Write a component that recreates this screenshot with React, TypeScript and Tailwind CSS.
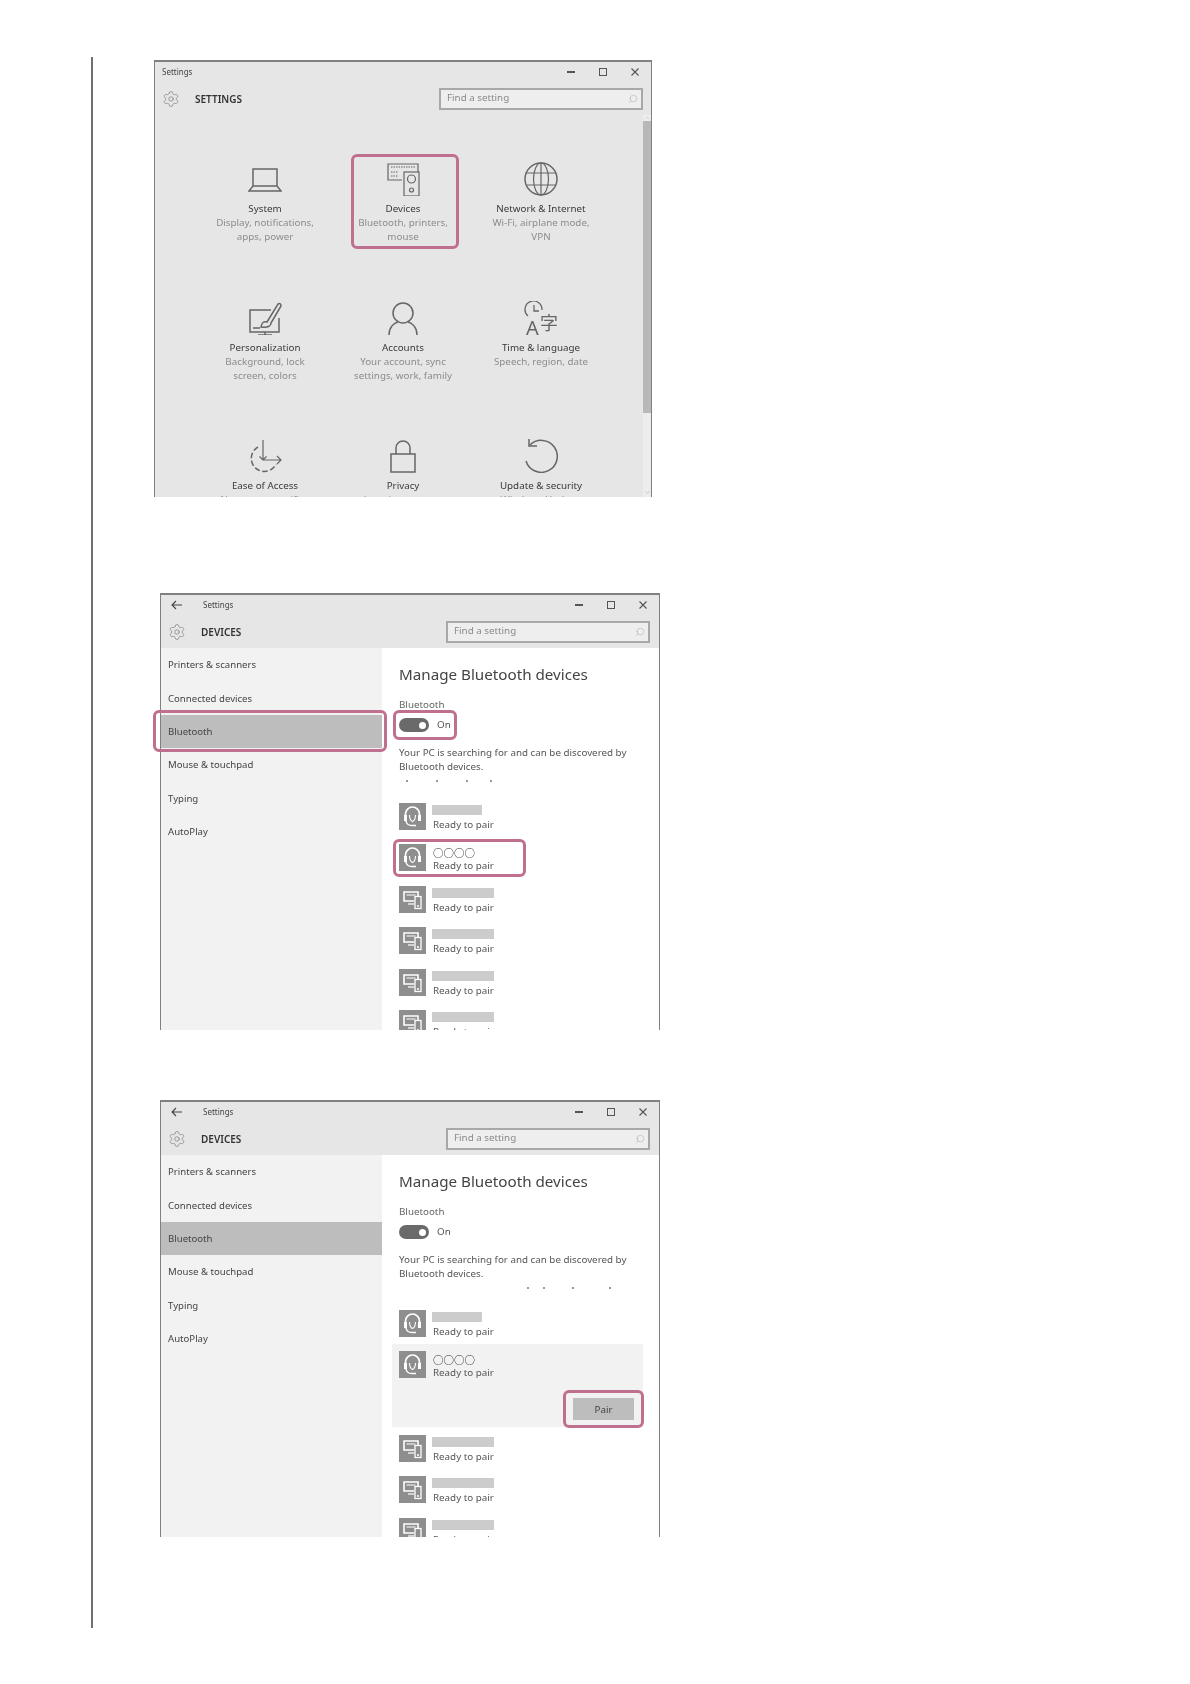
import { ChevronDown, ChevronUp, Search, Settings } from "lucide-react";
import type { ReactNode } from "react";

const font = { fontFamily: '"Noto Sans", "Noto Sans CJK JP", sans-serif' };

function Controls() {
  return (
    <div className="ml-auto flex h-full text-[#444]">
      <div className="flex w-[32px] items-center justify-center"><div className="h-[1.5px] w-[8px] bg-[#555]" /></div>
      <div className="flex w-[32px] items-center justify-center"><div className="size-[8px] border border-[#555]" /></div>
      <div className="flex w-[32px] items-center justify-center">
        <svg width="10" height="10" viewBox="0 0 10 10" fill="none" stroke="#555" strokeWidth="1.100"><path d="M1.500 1.500l7 7M8.500 1.500l-7 7" /></svg>
      </div>
    </div>
  );
}

function Header({ title, devices }: { title: string; devices?: boolean }) {
  return (
    <div className={`flex h-[33px] items-center pl-[7px] ${devices ? "pr-[9px]" : "pr-[8px]"}`}>
      <Settings size={18} strokeWidth={0.9} className="text-[#777]" />
      <div className="ml-[15px] pt-[1px] text-[10px] font-semibold text-[#333]">{title}</div>
      <div className="ml-auto flex h-[22px] w-[204px] items-center border-2 border-[#a8a8a8] bg-[#eeeeee] pl-[6px] pr-[3px] text-[9.8px] text-[#8a8a8a]">
        Find a setting
        <Search size={10} strokeWidth={1} className="ml-auto -scale-x-100 text-[#999]" />
      </div>
    </div>
  );
}

function Ring({ className }: { className: string }) {
  return <div className={`absolute rounded-[6px] border-[3px] border-[#c0708f] ${className}`} />;
}

const S = { fill: "none", stroke: "#666", strokeWidth: 1.2 };

function IconBox({ children }: { children: ReactNode }) {
  return <svg width="34" height="34" viewBox="0 0 34 34" {...S}>{children}</svg>;
}

const icons: Record<string, ReactNode> = {
  System: <IconBox><path d="M5 24V7h24v17M1 29l4-5h24l4 5z" strokeWidth="1.500" /></IconBox>,
  Devices: (
    <IconBox>
      <path d="M16 18H2V2h30v8" />
      <path d="M5 5h24M5 10h7M5 14h7" strokeDasharray="1.500 1" />
      <rect x="18" y="10" width="15" height="24" fill="#e6e6e6" />
      <circle cx="25.500" cy="17" r="4" />
      <circle cx="25.500" cy="28" r="2" />
    </IconBox>
  ),
  "Network & Internet": (
    <IconBox>
      <circle cx="17" cy="17" r="16" strokeWidth="1.500" />
      <ellipse cx="17" cy="17" rx="7.500" ry="16" />
      <path d="M17 1v32M2.500 11h29M2.500 23h29" />
    </IconBox>
  ),
  Personalization: (
    <IconBox>
      <path d="M23 9H2v22h29V17M17 31v3M10 34h14" strokeWidth="1.500" />
      <path d="M13 26c1-5 3-6 6-5L30 3c2-1 3 0 3 2L23 22c0 3-3 5-10 4zM5 27h7" strokeWidth="1.500" />
    </IconBox>
  ),
  Accounts: (
    <IconBox>
      <circle cx="17" cy="12" r="10" strokeWidth="1.500" />
      <path d="M3 34c0-8 5-12 9-13M31 34c0-8-5-12-9-13" strokeWidth="1.500" />
    </IconBox>
  ),
  "Time & language": (
    <IconBox>
      <path d="M4 15A8.500 8.500 0 1 1 18 9M10 4v6h5" strokeWidth="1.300" />
      <text x="2" y="34" fontSize="20" fill="#666" stroke="none" style={font}>A</text>
      <text x="16" y="29" fontSize="18" fill="#666" stroke="none" style={font}>字</text>
    </IconBox>
  ),
  "Ease of Access": (
    <IconBox>
      <path d="M10 8A13 13 0 1 0 28 25" strokeDasharray="5.500 2.500" strokeWidth="1.500" />
      <path d="M15 1v20M11.500 17.500l3.500 3.500 3.500-3.500M15 21h18M29 17l4 4-4 4" />
    </IconBox>
  ),
  Privacy: (
    <IconBox>
      <rect x="5" y="15" width="24" height="18" strokeWidth="1.500" />
      <path d="M10 15V9a7 7 0 0 1 14 0v6" strokeWidth="1.500" />
    </IconBox>
  ),
  "Update & security": (
    <IconBox>
      <path d="M6 6A16 16 0 1 1 2 22" strokeWidth="1.500" />
      <path d="M5 0v7h8" strokeWidth="1.500" />
    </IconBox>
  ),
};

const items: [string, string[]][] = [
  ["System", ["Display, notifications,", "apps, power"]],
  ["Devices", ["Bluetooth, printers,", "mouse"]],
  ["Network & Internet", ["Wi-Fi, airplane mode,", "VPN"]],
  ["Personalization", ["Background, lock", "screen, colors"]],
  ["Accounts", ["Your account, sync", "settings, work, family"]],
  ["Time & language", ["Speech, region, date"]],
  ["Ease of Access", ["Narrator, magnifier,"]],
  ["Privacy", ["Location, camera"]],
  ["Update & security", ["Windows Update,"]],
];

function SettingsWindow() {
  return (
    <div className="relative mt-[3px] w-[498px]">
      <div className="flex h-[437px] flex-col overflow-hidden border-x border-t-2 border-[#808080] bg-[#e6e6e6]">
        <div className="flex h-[20px] shrink-0 items-center pl-[7px] text-[8px] text-[#444]">
          Settings
          <Controls />
        </div>
        <Header title="SETTINGS" />
        <div className="flex min-h-0 flex-1">
          <div className="grid flex-1 auto-rows-[138.5px] grid-cols-[repeat(3,138px)] pl-[41px] pt-[47px]">
            {items.map(([name, lines]) => (
              <div key={name} className="flex flex-col items-center text-center text-[9.8px] leading-[14px]">
                <div className="mb-[6px] h-[34px]">{icons[name]}</div>
                <div className="text-[#3a3a3a]">{name}</div>
                {lines.map((l) => (
                  <div key={l} className="whitespace-nowrap text-[#8c8c8c]">{l}</div>
                ))}
              </div>
            ))}
          </div>
          <div className="flex w-[8px] flex-col items-center bg-[#ededed] text-[#aaa]">
            <ChevronUp size={7} className="h-[6px]" />
            <div className="h-[292px] w-full bg-[#b8b8b8]" />
            <ChevronDown size={7} className="mt-auto mb-[1px]" />
          </div>
        </div>
      </div>
      <Ring className="left-[197px] top-[94px] h-[95px] w-[108px]" />
    </div>
  );
}

function Headset() {
  return (
    <svg width="27" height="27" viewBox="0 0 27 27" fill="none" stroke="#fff" strokeWidth="1.700" className="bg-[#8e8e8e]">
      <path d="M6.500 13v-2a7 7 0 0 1 14 0v2" />
      <rect x="5" y="12" width="3" height="6" fill="#fff" stroke="none" />
      <rect x="19" y="12" width="3" height="6" fill="#fff" stroke="none" />
      <path d="M10.500 12c0 3.500 1 5.500 3 6.500 2-1 3-3 3-6.500" strokeWidth="1.100" />
      <path d="M7 18c.5 3 3 4.500 6 4.500h4" strokeWidth="1.500" />
    </svg>
  );
}

function DeviceGlyph() {
  return (
    <svg width="27" height="27" viewBox="0 0 27 27" fill="none" stroke="#fff" strokeWidth="1.600" className="bg-[#8e8e8e]">
      <path d="M15 15H5V6h14v4" />
      <path d="M7.500 9h9" strokeWidth="1" />
      <path d="M9 18h6" strokeWidth="1.200" />
      <rect x="16" y="10.500" width="6" height="12" strokeWidth="1.300" />
      <path d="M19 19v2" strokeWidth="1.500" />
    </svg>
  );
}

function Row({ kind, wide, named }: { kind: "head" | "dev"; wide?: boolean; named?: boolean }) {
  return (
    <div className="flex h-[27px] shrink-0">
      {kind === "head" ? <Headset /> : <DeviceGlyph />}
      <div className="ml-[6px] flex flex-col text-[9.8px] leading-[14px] text-[#555]">
        {named ? (
          <div className="mt-[2px] -mb-[1px] shrink-0 pl-[1px] text-[10.5px] text-[#333]">○○○○</div>
        ) : (
          <div className={`mt-[2px] mb-[3px] h-[10px] shrink-0 bg-[#cccccc] ${wide ? "w-[62px]" : "w-[50px]"}`} />
        )}
        <div className="shrink-0 whitespace-nowrap pl-[1px]">Ready to pair</div>
      </div>
    </div>
  );
}

function DevicesWindow({ step }: { step: 2 | 3 }) {
  const menu = ["Printers & scanners", "Connected devices", "Bluetooth", "Mouse & touchpad", "Typing", "AutoPlay"];
  return (
    <div className="relative w-[500px]">
      <div className="flex h-[437px] flex-col overflow-hidden border-x border-t-2 border-[#808080] bg-[#e6e6e6]">
        <div className="flex h-[20px] shrink-0 items-center text-[8px] text-[#444]">
          <svg width="12" height="10" viewBox="0 0 12 10" fill="none" stroke="#444" strokeWidth="1.100" className="ml-[10px]"><path d="M11 5H1M5 1L1 5l4 4" /></svg>
          <span className="ml-[20px]">Settings</span>
          <Controls />
        </div>
        <Header title="DEVICES" devices />
        <div className="flex min-h-0 flex-1 bg-white">
          <div className="w-[221px] shrink-0 bg-[#f2f2f2] text-[9.6px] text-[#444]">
            {menu.map((m) => (
              <div key={m} className={`flex h-[33.3px] items-center pl-[7px] pt-[2px] ${m === "Bluetooth" ? "bg-[#bdbdbd]" : ""}`}>{m}</div>
            ))}
          </div>
          <div className="min-w-0 flex-1 pl-[17px]">
            <div className="mt-[14px] h-[24px] whitespace-nowrap text-[15.2px] leading-[24px] text-[#444]">Manage Bluetooth devices</div>
            <div className="mt-[12px] h-[14px] text-[9.8px] leading-[14px] text-[#666]">
              <div className={step === 2 ? "h-[10px] overflow-hidden" : ""}>Bluetooth</div>
            </div>
            <div className="mt-[6px] flex h-[14px] items-center text-[9.8px] text-[#555]">
              <div className="flex h-[14px] w-[30px] items-center justify-end rounded-full bg-[#6a6a6a] pr-[3px]">
                <div className="size-[7px] rounded-full bg-white" />
              </div>
              <span className="ml-[8px]">On</span>
            </div>
            <div className="mt-[14px] whitespace-nowrap text-[9.8px] leading-[14px] text-[#555]">
              Your PC is searching for and can be discovered by
              <br />
              Bluetooth devices.
            </div>
            <div className="mt-[6px] flex h-[2px]">
              {(step === 2 ? ["ml-[7px]", "ml-[28px]", "ml-[28px]", "ml-[22px]"] : ["ml-[128px]", "ml-[14px]", "ml-[27px]", "ml-[35px]"]).map((c, i) => (
                <div key={i} className={`size-[2px] rounded-full bg-[#777] ${c}`} />
              ))}
            </div>
            <div className="mt-[21px] flex flex-col gap-[14.4px]">
              <Row kind="head" />
              {step === 2 ? (
                <Row kind="head" named />
              ) : (
                <div className="-mx-[7px] -my-[7px] w-[251px] bg-[#f2f2f2] px-[7px] py-[7px]">
                  <Row kind="head" named />
                  <div className="ml-[174px] mt-[20px] flex h-[22px] w-[61px] items-center justify-center bg-[#bdbdbd] pt-[1px] text-[9.8px] text-[#444]">Pair</div>
                </div>
              )}
              <Row kind="dev" wide />
              <Row kind="dev" wide />
              {step === 2 && <Row kind="dev" wide />}
              <Row kind="dev" wide />
            </div>
          </div>
        </div>
      </div>
      {step === 2 ? (
        <>
          <Ring className="-left-[7px] top-[117px] h-[42px] w-[234px]" />
          <Ring className="left-[233px] top-[117px] h-[30px] w-[64px]" />
          <Ring className="left-[233px] top-[246px] h-[38px] w-[133px]" />
        </>
      ) : (
        <Ring className="left-[403px] top-[290px] h-[38px] w-[81px]" />
      )}
    </div>
  );
}

export default function App() {
  return (
    <div className="h-[1684px] bg-white pt-[57px] pl-[91px] blur-[0.55px]" style={font}>
      <div className="flex h-[1571px] w-[600px] flex-col border-l-2 border-[#707070] pl-[61px]">
        <SettingsWindow />
        <div className="ml-[6px] mt-[96px]"><DevicesWindow step={2} /></div>
        <div className="ml-[6px] mt-[70px]"><DevicesWindow step={3} /></div>
      </div>
    </div>
  );
}
